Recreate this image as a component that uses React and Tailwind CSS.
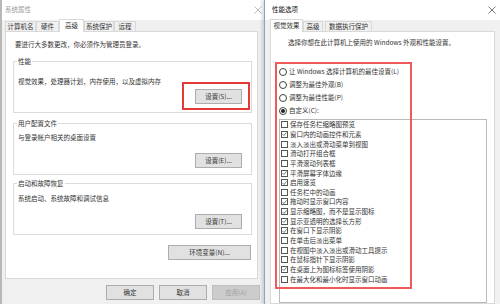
import React from 'react';

const effects = [
  ['保存任务栏缩略图预览', false],
  ['窗口内的动画控件和元素', true],
  ['淡入淡出或滑动菜单到视图', false],
  ['滑动打开组合框', false],
  ['平滑滚动列表框', false],
  ['平滑屏幕字体边缘', true],
  ['启用速览', true],
  ['任务栏中的动画', false],
  ['拖动时显示窗口内容', true],
  ['显示缩略图，而不是显示图标', true],
  ['显示亚透明的选择长方形', true],
  ['在窗口下显示阴影', true],
  ['在单击后淡出菜单', false],
  ['在视图中淡入淡出或滑动工具提示', false],
  ['在鼠标指针下显示阴影', false],
  ['在桌面上为图标标签使用阴影', true],
  ['在最大化和最小化时显示窗口动画', false],
];

function CloseX({ color }) {
  return (
    <svg width="8" height="8" viewBox="0 0 8 8">
      <path d="M0.5 0.5 L7.5 7.5 M7.5 0.5 L0.5 7.5" stroke={color} strokeWidth="0.8" fill="none" />
    </svg>
  );
}

function Btn({ children, className = '', disabled }) {
  return (
    <div
      className={`flex h-[15px] items-center justify-center border ${
        disabled ? 'border-[#bfbfbf] bg-[#cccccc] text-[#a0a0a0]' : 'border-[#adadad] bg-[#e1e1e1]'
      } ${className}`}
    >
      {children}
    </div>
  );
}

function Tab({ children, active, className = '' }) {
  if (active) {
    return (
      <div className={`relative z-10 -mb-px flex h-[13px] items-center justify-center border border-b-0 border-[#d9d9d9] bg-white ${className}`}>
        {children}
      </div>
    );
  }
  return (
    <div className={`flex h-[10px] items-center justify-center border border-b-0 border-[#d9d9d9] bg-[#f0f0f0] ${className}`}>
      {children}
    </div>
  );
}

function Group({ label, className = '', children }) {
  return (
    <div className={`relative border border-[#dcdcdc] ${className}`}>
      <span className="absolute left-[3px] top-[-5px] bg-white px-px leading-[9px]">{label}</span>
      {children}
    </div>
  );
}

function Radio({ checked }) {
  return (
    <div className="flex h-[8px] w-[8px] items-center justify-center rounded-full border border-[#444]">
      {checked && <div className="h-[4px] w-[4px] rounded-full bg-[#222]" />}
    </div>
  );
}

function Check({ checked }) {
  return (
    <div className="flex h-[7px] w-[7px] items-center justify-center border border-[#555] bg-white">
      {checked && (
        <svg width="6" height="6" viewBox="0 0 6 6">
          <path d="M0.6 3 L2.3 4.8 L5.5 1" stroke="#333" strokeWidth="0.8" fill="none" />
        </svg>
      )}
    </div>
  );
}

function SystemProperties() {
  return (
    <div className="absolute left-0 top-0 flex h-[304px] w-[268px] flex-col border-l-2 border-[#b8b8b8] bg-[#f0f0f0]">
      <div className="flex h-[20px] items-center justify-between bg-white pl-[3px] pr-[6px] text-[#9a9a9a]">
        <span>系统属性</span>
        <CloseX color="#aaa" />
      </div>
      <div className="flex h-[11px] items-end pl-[3px]">
        <Tab className="w-[31px]">计算机名</Tab>
        <Tab className="w-[23px]">硬件</Tab>
        <Tab active className="w-[25px]">高级</Tab>
        <Tab className="w-[30px]">系统保护</Tab>
        <Tab className="w-[22px]">远程</Tab>
      </div>
      <div className="relative ml-[3px] flex h-[248px] w-[253px] flex-col border border-[#d9d9d9] bg-white">
        <div className="mt-[8px] pl-[9px] leading-[9px]">要进行大多数更改，你必须作为管理员登录。</div>
        <Group label="性能" className="ml-[7px] mt-[12px] h-[52px] w-[239px]">
          <div className="mt-[15px] pl-[4px] leading-[9px]">视觉效果，处理器计划，内存使用，以及虚拟内存</div>
          <div className="mt-[3px] flex justify-end pr-[9px]">
            <Btn className="w-[47px]">设置(S)...</Btn>
          </div>
          <div className="absolute left-[168px] top-[20px] h-[28px] w-[68px] border-2 border-[#e53935]" />
        </Group>
        <Group label="用户配置文件" className="ml-[7px] mt-[10px] h-[52px] w-[239px]">
          <div className="mt-[9px] pl-[4px] leading-[9px]">与登录帐户相关的桌面设置</div>
          <div className="mt-[11px] flex justify-end pr-[9px]">
            <Btn className="w-[47px]">设置(E)...</Btn>
          </div>
        </Group>
        <Group label="启动和故障恢复" className="ml-[7px] mt-[8px] h-[52px] w-[239px]">
          <div className="mt-[10px] pl-[4px] leading-[9px]">系统启动、系统故障和调试信息</div>
          <div className="mt-[11px] flex justify-end pr-[9px]">
            <Btn className="w-[47px]">设置(T)...</Btn>
          </div>
        </Group>
        <div className="mt-[10px] flex justify-end pr-[6px]">
          <Btn className="w-[83px]">环境变量(N)...</Btn>
        </div>
      </div>
      <div className="mt-[6px] flex gap-[5px] pl-[104px]">
        <Btn className="w-[48px]">确定</Btn>
        <Btn className="w-[48px]">取消</Btn>
        <Btn disabled className="w-[48px]">应用(A)</Btn>
      </div>
    </div>
  );
}

function PerformanceOptions() {
  return (
    <div className="absolute left-[264px] top-0 flex h-[304px] w-[240px] flex-col border-l border-[#8aa4c0] bg-[#f0f0f0] shadow-[-2px_0_3px_rgba(0,0,0,0.15)]">
      <div className="flex h-[20px] items-center justify-between bg-white pl-[7px] pr-[8px] text-[#111]">
        <span>性能选项</span>
        <CloseX color="#555" />
      </div>
      <div className="flex h-[11px] items-end pl-[5px]">
        <Tab active className="w-[33px]">视觉效果</Tab>
        <Tab className="w-[20px]">高级</Tab>
        <Tab className="ml-[2px] w-[47px]">数据执行保护</Tab>
      </div>
      <div className="relative ml-[5px] flex w-[225px] flex-1 flex-col border border-[#d9d9d9] bg-white">
        <div className="mt-[6px] pl-[17px] leading-[9px]">选择你想在此计算机上使用的 Windows 外观和性能设置。</div>
        <div className="mt-[18px] flex flex-col pl-[8px]">
          {[
            ['让 Windows 选择计算机的最佳设置(L)', false],
            ['调整为最佳外观(B)', false],
            ['调整为最佳性能(P)', false],
            ['自定义(C):', true],
          ].map(([t, c]) => (
            <div key={t} className="flex h-[13px] items-center gap-[2px]">
              <Radio checked={c} />
              <span className="leading-[9px]">{t}</span>
            </div>
          ))}
        </div>
        <div className="ml-[8px] mt-[2px] flex w-[208px] flex-1 flex-col border border-[#b9b9b9] pl-[1px]">
          {effects.map(([t, c]) => (
            <div key={t} className="flex h-[9.65px] items-center gap-[2px]">
              <Check checked={c} />
              <span className="leading-[9px]">{t}</span>
            </div>
          ))}
        </div>
        <div className="absolute left-[4px] top-[30px] h-[227px] w-[137px] border-2 border-[#ef5b5b]" />
      </div>
    </div>
  );
}

export default function App() {
  return (
    <div className="relative h-[304px] w-[500px] overflow-hidden bg-[#f0f0f0] font-['Noto_Sans_CJK_SC','Microsoft_YaHei',sans-serif] text-[6.5px] text-[#333]">
      <SystemProperties />
      <PerformanceOptions />
    </div>
  );
}
